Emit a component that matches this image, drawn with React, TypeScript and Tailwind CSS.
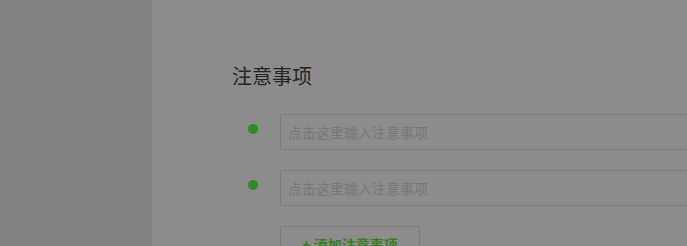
export default function App() {
  const items = ["", ""];
  return (
    <div className="flex h-[246px] w-[687px] overflow-hidden bg-[#8c8c8c] font-['Noto_Sans_CJK_SC','Noto_Sans',sans-serif]">
      <aside className="h-full w-[152px] shrink-0 bg-[#838383]" />

      <main className="min-w-0 flex-1 pl-[80px] pt-[62px]">
        <h2 className="text-[20px] leading-[28px] text-[#262626]">注意事项</h2>

        <div className="mt-[24px] flex flex-col gap-[20px]">
          {items.map((v, i) => (
            <div key={i} className="flex items-start">
              <span className="ml-[16px] mt-[10px] h-[10px] w-[10px] shrink-0 rounded-full bg-[#2e8a22]" />
              <input
                defaultValue={v}
                placeholder="点击这里输入注意事项"
                className="ml-[22px] h-[36px] w-[520px] shrink-0 border border-[#7b7b7b] bg-transparent px-[7px] text-[14px] text-[#333] outline-none placeholder:text-[#767676]"
              />
            </div>
          ))}
        </div>

        <button className="ml-[48px] mt-[20px] flex h-[36px] w-[140px] items-center justify-center border border-[#7b7b7b] text-[14px] font-bold text-[#3b7d24]">
          + 添加注意事项
        </button>
      </main>
    </div>
  );
}
